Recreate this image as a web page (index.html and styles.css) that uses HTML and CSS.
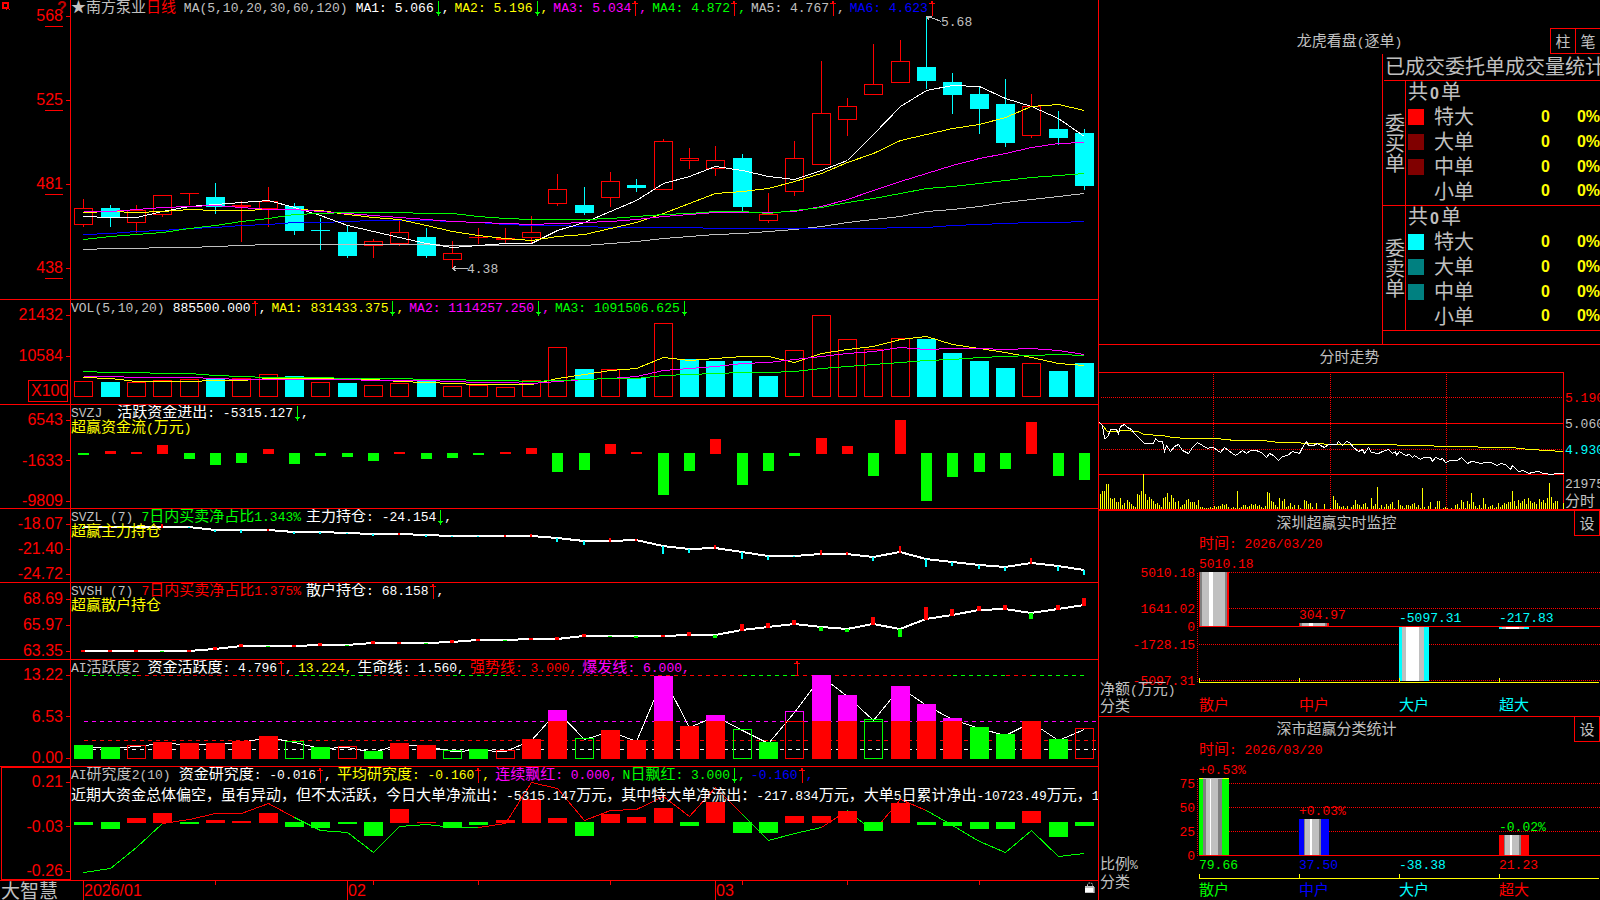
FILE: index.html
```html
<!DOCTYPE html>
<html lang="zh-CN">
<head>
<meta charset="utf-8">
<title>南方泵业 日线 - 大智慧</title>
<link rel="stylesheet" href="styles.css">
</head>
<body>
<svg class="defs" aria-hidden="true">
  <symbol id="up" viewBox="0 0 8 15"><path d="M3 0h2v2h2v1H5v12H4V3H1V2h2z" fill="#f00"/></symbol>
  <symbol id="dn" viewBox="0 0 8 15"><path d="M4 0h1v11h2v1H6v1H5v2H4v-2H3v-1H2v-1h2z" fill="#0f0"/></symbol>
</svg>
<main class="desk">
  <div class="left">
    <section class="panel">
      <div class="axis a1">
        <svg class="pin" viewBox="0 0 9 9"><path d="M0 0h7v7h1v1H7V7H5v1H4V7H0z M2 2v3h3V2z" fill="#f00" fill-rule="evenodd"/></svg>
        <span class="help">?</span>
        <span class="lab">5<u>68</u></span><span class="lab">5<u>25</u></span><span class="lab">4<u>81</u></span><span class="lab">4<u>38</u></span>
      </div>
      <div class="plot">
        <svg id="kline" class="chart"></svg>
        <div class="head"><div class="row">
          <span class="ttl g"><span class="z">★南方泵业<span class="r">日线</span></span> MA(5,10,20,30,60,120)</span>
          <span class="w">MA1: 5.066<svg class="ar"><use href="#dn"/></svg>,</span>
          <span class="y">MA2: 5.196<svg class="ar"><use href="#dn"/></svg>,</span>
          <span class="m">MA3: 5.034<svg class="ar"><use href="#up"/></svg>,</span>
          <span class="n">MA4: 4.872<svg class="ar"><use href="#up"/></svg>,</span>
          <span class="g">MA5: 4.767<svg class="ar"><use href="#up"/></svg>,</span>
          <span class="b">MA6: 4.623<svg class="ar"><use href="#up"/></svg></span>
        </div></div>
      </div>
    </section>
    <section class="panel">
      <div class="axis a2"><span class="lab">21432</span><span class="lab">10584</span><span class="unit">X100</span></div>
      <div class="plot">
        <svg id="vol" class="chart"></svg>
        <div class="head"><div class="row">
          <span class="ttl g">VOL(5,10,20)</span>
          <span class="w">885500.000<svg class="ar"><use href="#up"/></svg>,</span>
          <span class="y">MA1: 831433.375<svg class="ar"><use href="#dn"/></svg>,</span>
          <span class="m">MA2: 1114257.250<svg class="ar"><use href="#dn"/></svg>,</span>
          <span class="n">MA3: 1091506.625<svg class="ar"><use href="#dn"/></svg></span>
        </div></div>
      </div>
    </section>
    <section class="panel">
      <div class="axis a3"><span class="lab">6543</span><span class="lab">-1633</span><span class="lab">-9809</span></div>
      <div class="plot">
        <svg id="flow" class="chart"></svg>
        <div class="head"><div class="row">
          <span class="ttl wide g">SVZJ</span>
          <span class="w"><span class="z">活跃资金进出</span>: -5315.127<svg class="ar"><use href="#dn"/></svg>,</span>
        </div><div class="y"><span class="z">超赢资金流</span>(<span class="z">万元</span>)</div></div>
      </div>
    </section>
    <section class="panel">
      <div class="axis a4"><span class="lab">-18.07</span><span class="lab">-21.40</span><span class="lab">-24.72</span></div>
      <div class="plot">
        <svg id="main" class="chart"></svg>
        <div class="head"><div class="row">
          <span class="ttl g">SVZL (7)</span>
          <span class="n">7<span class="z">日内买卖净占比</span>1.343%</span>
          <span class="w"><span class="z">主力持仓</span>: -24.154<svg class="ar"><use href="#dn"/></svg>,</span>
        </div><div class="y z">超赢主力持仓</div></div>
      </div>
    </section>
    <section class="panel">
      <div class="axis a5"><span class="lab">68.69</span><span class="lab">65.97</span><span class="lab">63.35</span></div>
      <div class="plot">
        <svg id="retail" class="chart"></svg>
        <div class="head"><div class="row">
          <span class="ttl g">SVSH (7)</span>
          <span class="r">7<span class="z">日内买卖净占比</span>1.375%</span>
          <span class="w"><span class="z">散户持仓</span>: 68.158<svg class="ar"><use href="#up"/></svg>,</span>
        </div><div class="y z">超赢散户持仓</div></div>
      </div>
    </section>
    <section class="panel">
      <div class="axis a4"><span class="lab">13.22</span><span class="lab">6.53</span><span class="lab">0.00</span></div>
      <div class="plot">
        <svg id="active" class="chart"></svg>
        <div class="head"><div class="row">
          <span class="ttl g">AI<span class="z">活跃度</span>2</span>
          <span class="w"><span class="z">资金活跃度</span>: 4.796<svg class="ar"><use href="#up"/></svg>,</span>
          <span class="y">13.224,</span>
          <span class="w"><span class="z">生命线</span>: 1.560,</span>
          <span class="r"><span class="z">强势线</span>: 3.000,</span>
          <span class="m"><span class="z">爆发线</span>: 6.000,</span>
          <svg class="ar far"><use href="#up"/></svg>
        </div></div>
      </div>
    </section>
    <section class="panel">
      <div class="axis a4 picked"><span class="lab">0.21</span><span class="lab">-0.03</span><span class="lab">-0.26</span></div>
      <div class="plot">
        <svg id="study" class="chart"></svg>
        <div class="head"><div class="row">
          <span class="ttl g">AI<span class="z">研究度</span>2(10)</span>
          <span class="w"><span class="z">资金研究度</span>: -0.016<svg class="ar"><use href="#up"/></svg>,</span>
          <span class="y"><span class="z">平均研究度</span>: -0.160<svg class="ar"><use href="#up"/></svg>,</span>
          <span class="m"><span class="z">连续飘红</span>: 0.000,</span>
          <span class="n">N<span class="z">日飘红</span>: 3.000<svg class="ar"><use href="#dn"/></svg>,</span>
          <span class="b">-0.160<svg class="ar"><use href="#up"/></svg>,</span>
        </div>
        <p class="note"><span class="z">近期大资金总体偏空，虽有异动，但不太活跃，今日大单净流出：</span>-5315.147<span class="z">万元，其中特大单净流出：</span>-217.834<span class="z">万元，大单</span>5<span class="z">日累计净出</span>-10723.49<span class="z">万元，</span>1</p></div>
      </div>
    </section>
    <footer class="foot">
      <span class="brand">大智慧</span>
      <svg id="dates" class="chart"></svg>
      <svg class="lock" viewBox="0 0 11 12"><path d="M3.5 4V2.500L4.500 1h3l1 1.500V4" fill="none" stroke="#c0c0c0" stroke-dasharray="2 1"/><path d="M2 11h9V5h-1z" fill="#808080"/><rect x="1" y="4" width="9" height="7" fill="#c0c0c0"/><rect x="1" y="6" width="8" height="4" fill="#fff"/></svg>
    </footer>
  </div>
  <div class="right">
    <section class="orders">
      <header class="ohead">
        <h2>龙虎看盘<span class="s">(</span>逐单<span class="s">)</span></h2>
        <div class="btns"><button type="button">柱</button><button type="button">笔</button></div>
      </header>
      <div class="stats">
        <h3>已成交委托单成交量统计</h3>
        <table>
          <colgroup><col class="c1"><col class="c2"><col class="c3"><col class="c4"><col class="c5"></colgroup>
          <tbody>
            <tr class="sum"><th rowspan="5" class="side">委买单</th><td colspan="4">共<b>0</b>单</td></tr>
            <tr><td><i class="sw s1"></i></td><th>特大</th><td>0</td><td>0%</td></tr>
            <tr><td><i class="sw s2"></i></td><th>大单</th><td>0</td><td>0%</td></tr>
            <tr><td><i class="sw s2"></i></td><th>中单</th><td>0</td><td>0%</td></tr>
            <tr class="end"><td></td><th>小单</th><td>0</td><td>0%</td></tr>
          </tbody>
          <tbody>
            <tr class="sum"><th rowspan="5" class="side">委卖单</th><td colspan="4">共<b>0</b>单</td></tr>
            <tr><td><i class="sw s3"></i></td><th>特大</th><td>0</td><td>0%</td></tr>
            <tr><td><i class="sw s4"></i></td><th>大单</th><td>0</td><td>0%</td></tr>
            <tr><td><i class="sw s4"></i></td><th>中单</th><td>0</td><td>0%</td></tr>
            <tr class="end"><td></td><th>小单</th><td>0</td><td>0%</td></tr>
          </tbody>
        </table>
      </div>
    </section>
    <section class="card tick">
      <header class="chead tall"><h2>分时走势</h2></header>
      <div class="plot"><svg id="intraday" class="chart"></svg></div>
    </section>
    <section class="card">
      <header class="chead"><h2>深圳超赢实时监控</h2><button type="button">设</button></header>
      <div class="plot"><svg id="monitor" class="chart"></svg></div>
    </section>
    <section class="card last">
      <header class="chead"><h2>深市超赢分类统计</h2><button type="button">设</button></header>
      <div class="plot"><svg id="share" class="chart"></svg></div>
    </section>
  </div>
</main>
<script src="charts.js"></script>
</body>
</html>
```
FILE: styles.css
```css
* { box-sizing: border-box; }
body {
  margin: 0;
  background: #000;
  color: #c0c0c0;
  font: 13px/15px "Liberation Mono", "Noto Sans CJK SC", monospace;
  overflow: hidden;
}
h2, h3, p { margin: 0; font-weight: normal; }
.defs { position: absolute; width: 0; height: 0; }

.desk {
  display: grid;
  grid-template-columns: minmax(0, 1099fr) minmax(0, 501fr);
  grid-template-rows: minmax(0, 1fr);
  height: 100vh;
}
.left {
  display: grid;
  grid-template-columns: minmax(0, 1fr);
  grid-template-rows: minmax(0, 300fr) minmax(0, 105fr) minmax(0, 104fr) minmax(0, 74fr) minmax(0, 77fr) minmax(0, 107fr) minmax(0, 114fr) minmax(0, 19fr);
  border-right: 1px solid #f00;
  min-width: 0;
}
.right {
  display: grid;
  grid-template-columns: minmax(0, 1fr);
  grid-template-rows: minmax(0, 345fr) minmax(0, 166fr) minmax(0, 206fr) minmax(0, 183fr);
  min-width: 0;
  overflow: hidden;
}

/* indicator panels */
.panel {
  display: grid;
  grid-template-columns: 71px minmax(0, 1fr);
  grid-template-rows: minmax(0, 1fr);
  border-bottom: 1px solid #f00;
}
.axis {
  position: relative;
  display: flex;
  flex-direction: column;
  justify-content: space-between;
  border-right: 1px solid #f00;
  color: #f00;
  font: 16px/14px "Liberation Sans", sans-serif;
}
.lab {
  display: flex;
  justify-content: flex-end;
  align-items: center;
}
.lab::after {
  content: "";
  width: 4px;
  height: 1px;
  margin-left: 3px;
  background: #f00;
}
.lab u { text-decoration: none; border-bottom: 1px solid #f00; margin-bottom: -4px; padding-bottom: 3px; }
.a1 { padding: 9px 0 24px; }
.a2 { padding: 8px 0 0; justify-content: flex-start; gap: 27px; }
.a3 { padding: 8px 0 0; }
.a4 { padding: 8px 0 1px; }
.a5 { padding: 9px 0 1px; }
.a2 .unit {
  align-self: flex-end;
  width: 40px;
  margin: -10px 2px 0 0;
  padding-left: 2px;
  border: 1px solid #f00;
  line-height: 20px;
}
.picked { border: 1px solid #f00; margin-left: 1px; padding-top: 7px; }
.pin { position: absolute; left: 2px; top: 2px; width: 9px; height: 9px; }
.help {
  position: absolute;
  left: 57px;
  top: 1px;
  color: #c00000;
  font: bold 16px/14px "Liberation Sans", sans-serif;
}

.plot {
  display: grid;
  grid-template: minmax(0, 1fr) / minmax(0, 1fr);
  min-width: 0;
  min-height: 0;
  overflow: hidden;
}
.plot > * { grid-area: 1 / 1; }
.chart { display: block; width: 100%; height: 100%; min-width: 0; min-height: 0; shape-rendering: crispEdges; }
.chart text { white-space: pre; }
.chart .zt { font-size: 15px; }
.chart .dt { font: 16px "Liberation Sans", sans-serif; }
.head { white-space: nowrap; min-width: 0; overflow: hidden; z-index: 1; }
.row { display: flex; gap: 5px; height: 16px; padding-top: 1px; }
.ttl { margin-right: 3px; }
.ttl.wide { margin-right: 10px; }
.z { font-size: 15px; }
.ar { width: 8px; height: 15px; vertical-align: top; shape-rendering: crispEdges; }
.far { margin-left: 98px; }
.note { margin-top: 6px; color: #fff; }

.w { color: #fff; }
.y { color: #ff0; }
.m { color: #f0f; }
.n { color: #0f0; }
.r { color: #f00; }
.b { color: #00f; }
.g { color: #c0c0c0; }

.foot {
  display: grid;
  grid-template-columns: 71px minmax(0, 1fr) 14px;
  grid-template-rows: minmax(0, 1fr);
  overflow: hidden;
}
.brand { padding-left: 1px; font-size: 19px; line-height: 18px; font-family: "Noto Sans CJK SC", sans-serif; }
.foot .chart { overflow: visible; }
.lock { width: 11px; height: 12px; margin-top: 1px; }

/* order statistics */
button {
  margin: 0;
  padding: 0;
  border: 1px solid #f00;
  border-radius: 0;
  background: #000;
  color: #c0c0c0;
  font: 15px/20px "Noto Sans CJK SC", sans-serif;
}
h2 { padding-top: 3px; font-size: 15px; line-height: 22px; text-align: center; }
h2 .s { font-size: 13px; }
.orders {
  display: flex;
  flex-direction: column;
  padding-top: 28px;
  border-bottom: 1px solid #f00;
  overflow: hidden;
}
.ohead { display: grid; flex: none; height: 26px; align-items: end; }
.ohead > * { grid-area: 1 / 1; }
.btns { display: flex; justify-self: end; }
.btns button { width: 25px; height: 26px; border-right: 0; }
.stats {
  flex: 1;
  width: 218px;
  margin-left: auto;
  border-left: 1px solid #f00;
  font-family: "Noto Sans CJK SC", sans-serif;
  overflow: hidden;
}
h3 {
  height: 27px;
  margin-left: 1px;
  padding-left: 1px;
  border-bottom: 1px solid #f00;
  font-size: 20px;
  line-height: 23px;
  white-space: nowrap;
}
table {
  width: 217px;
  table-layout: fixed;
  border-spacing: 0;
  font-size: 20px;
  line-height: 20px;
}
.c1 { width: 23px; }
.c2 { width: 28px; }
.c3 { width: 60px; }
.c4 { width: 56px; }
.c5 { width: 50px; }
th, td { padding: 0; font-weight: normal; text-align: left; height: 25px; }
th:not(.side) { padding-bottom: 2px; }
td:nth-child(n+3) {
  color: #ff0;
  font: bold 16px/20px "Liberation Sans", sans-serif;
  text-align: right;
}
.side { width: 23px; padding-left: 2px; border-right: 1px solid #f00; border-bottom: 1px solid #f00; }
.sum td { height: 23px; padding-left: 2px; }
.sum b { padding: 0 2px; font: bold 16px/20px "Liberation Sans", sans-serif; }
.end td, .end th { height: 27px; padding-bottom: 3px; border-bottom: 1px solid #f00; }
.sw { display: block; width: 16px; height: 16px; margin-left: 2px; }
.s1 { background: #f00; }
.s2 { background: #800000; }
.s3 { background: #0ff; }
.s4 { background: #008080; }

/* small chart cards */
.card { display: flex; flex-direction: column; border-bottom: 1px solid #f00; min-height: 0; }
.card .plot { flex: 1; }
.tick { border-bottom-width: 2px; }
.last { border-bottom: 0; }
.chead { display: flex; height: 25px; flex: none; }
.chead h2 { flex: 1; }
.tall { height: 27px; }
.chead button { width: 26px; border-top: 0; }
```
FILE: charts.js
```javascript
const NS = 'http://www.w3.org/2000/svg';
const RED = '#f00', CYAN = '#0ff', GREEN = '#0f0', WHITE = '#fff', YELLOW = '#ff0',
      PINK = '#f0f', BLUE = '#00f', GRAY = '#c0c0c0';

/* A drawing surface whose coordinates scale to the size of its element. */
function surface(id, x0, y0, w, h) {
  const svg = document.getElementById(id);
  svg.textContent = '';
  const box = svg.getBoundingClientRect();
  const kx = box.width / w, ky = box.height / h;
  const X = x => Math.round((x - x0) * kx);
  const Y = y => Math.round((y - y0) * ky);
  const add = (name, attrs) => {
    const el = document.createElementNS(NS, name);
    for (const k in attrs) el.setAttribute(k, attrs[k]);
    svg.appendChild(el);
    return el;
  };
  return {
    rect(x, y, x2, y2, fill) {
      add('rect', { x: X(x), y: Y(y), width: Math.max(1, X(x2) - X(x)), height: Math.max(1, Y(y2) - Y(y)), fill });
    },
    hollow(x, y, x2, y2, stroke) {
      add('rect', { x: X(x) + .5, y: Y(y) + .5, width: X(x2) - X(x) - 1, height: Math.max(1, Y(y2) - Y(y) - 1), fill: 'none', stroke });
    },
    line(pts, stroke, width = 1, dash) {
      const o = width % 2 ? .5 : 0;
      const a = { points: pts.map(p => (X(p[0]) + o) + ',' + (Y(p[1]) + o)).join(' '), fill: 'none', stroke, 'stroke-width': width };
      if (dash) a['stroke-dasharray'] = dash;
      add('polyline', a);
    },
    text(x, yc, str, fill, anchor = 'start') {
      const cjk = /[\u2e80-\uffff]/;
      const t = add('text', { x: X(x), y: Y(yc) + (cjk.test(str) ? 5 : 4), fill, 'text-anchor': anchor });
      for (const part of str.match(/[\u2e80-\uffff]+|[^\u2e80-\uffff]+/g)) {
        const s = document.createElementNS(NS, 'tspan');
        if (cjk.test(part)) s.setAttribute('class', 'zt');
        s.textContent = part;
        t.appendChild(s);
      }
      return t;
    }
  };
}

const cx = i => Math.round(83.2 + 26.34 * i);
const series = a => a.map((y, i) => [cx(i), y]);

/* kind, high, body top, body bottom, low */
const candles = [
  ['r',199,208,225,227],['c',205,208,217,227],['r',205,210,223,233],['r',195,195,215,217],['r',193,193,194,205],
  ['c',183,197,207,214],['r',201,205,207,242],['r',187,201,209,227],['c',203,206,231,235],['c',218,230,231,250],
  ['c',225,232,256,258],['r',239,241,246,258],['r',221,232,244,246],['c',228,237,256,258],['r',241,253,260,268],
  ['r',228,237,238,244],['r',228,238,240,243],['r',216,232,238,243],['r',174,189,204,206],['c',187,205,213,215],
  ['r',172,181,198,207],['c',179,185,188,192],['r',139,141,190,190],['r',148,158,161,169],['r',146,160,169,176],
  ['c',154,158,207,212],['r',193,214,221,223],['r',141,158,192,196],['r',61,113,165,165],['r',98,106,120,136],
  ['r',44,84,95,95],['r',40,61,83,83],['c',16,67,81,89],['c',73,82,95,114],['c',86,94,109,134],
  ['c',79,104,143,147],['r',94,106,136,138],['c',111,129,138,145],['c',129,133,186,190]
];
const averages = [
  [GRAY, [249,248,248,247,247,246,245,244,244,244,244,244,244,244,245,245,245,245,245,245,243,241,238,236,234,233,231,229,226,222,219,216,211,209,206,202,199,196,193]],
  [BLUE, [234,233,231,230,228,227,225,224,222,222,221,220,220,220,221,222,224,225,225,226,227,227,227,227,228,228,228,228,228,228,228,227,227,225,224,223,222,222,221]],
  [WHITE, [216,217,217,211,206,204,202,200,207,215,225,231,237,243,247,245,243,243,230,222,211,200,183,176,166,170,176,179,170,160,134,106,90,85,86,98,106,118,136]],
  [YELLOW, [212,211,212,211,209,210,210,209,209,210,214,217,219,225,231,235,238,240,236,234,228,222,213,203,193,191,188,181,173,162,153,140,134,128,124,117,106,104,110]],
  [PINK, [211,211,209,207,206,205,207,209,209,211,213,215,217,219,221,222,223,224,223,222,221,219,216,214,212,212,212,211,206,199,190,181,173,165,158,153,147,143,142]],
  [GREEN, [239,236,234,232,228,225,221,218,214,213,212,212,212,213,213,216,218,219,219,219,218,216,214,213,211,211,213,210,207,202,198,193,188,186,183,180,177,175,173]]
];

function drawKline() {
  const s = surface('kline', 71, 0, 1027, 299);
  candles.forEach(([k, hi, top, bot, lo], i) => {
    const x = cx(i);
    if (k === 'c') {
      s.rect(x, hi, x + 1, lo, CYAN);
      s.rect(x - 9, top, x + 10, bot, CYAN);
    } else {
      if (hi < top) s.rect(x, hi, x + 1, top, RED);
      if (lo > bot) s.rect(x, bot, x + 1, lo, RED);
      if (bot - top < 3) s.rect(x - 9, top, x + 10, bot, RED);
      else s.hollow(x - 9, top, x + 10, bot, RED);
    }
  });
  averages.forEach(([c, a]) => s.line(series(a), c));
  s.line([[926, 16], [933, 18], [941, 21]], GRAY);
  s.line([[931, 16], [926, 16], [929, 20]], GRAY);
  s.text(941, 22, '5.68', GRAY);
  s.line([[452, 268], [467, 268]], GRAY);
  s.line([[456, 265], [452, 268], [456, 271]], GRAY);
  s.text(467, 269, '4.38', GRAY);
}

function drawVolume() {
  const s = surface('vol', 71, 300, 1027, 104);
  const kinds = 'rcrrrcrrcrcrrcrrrrrcrcrccccrrrrrccccrcc';
  const tops = [381,382,382,380,379,379,378,374,376,382,383,385,383,381,386,385,387,380,347,369,369,378,323,359,361,361,376,350,315,339,349,338,339,353,361,368,363,371,363];
  tops.forEach((y, i) => s[kinds[i] === 'c' ? 'rect' : 'hollow'](cx(i) - 9, y, cx(i) + 10, 397, kinds[i] === 'c' ? CYAN : RED));
  s.line(series([377,378,381,381,381,380,380,378,378,378,379,379,381,382,383,384,384,384,378,374,370,368,357,360,358,356,356,362,353,349,346,339,336,344,348,352,357,363,365]), YELLOW);
  s.line(series([376,376,377,377,377,378,379,379,379,379,379,380,380,380,381,382,382,383,381,379,378,376,370,368,366,363,362,359,356,353,351,347,349,348,348,349,348,350,354]), PINK);
  s.line(series([371,372,372,373,373,375,376,377,377,377,378,378,378,379,379,380,380,381,380,379,378,378,375,374,373,372,372,371,368,366,364,362,360,359,357,356,355,354,355]), GREEN);
}

function drawFlow() {
  const s = surface('flow', 71, 405, 1027, 103);
  [455,451,452,445,459,465,463,449,464,456,457,461,452,459,458,455,452,448,472,470,444,452,495,471,439,485,471,456,438,446,476,420,501,477,472,469,422,476,480]
    .forEach((y, i) => y < 454 ? s.rect(cx(i) - 5, y, cx(i) + 6, 454, RED) : s.rect(cx(i) - 5, 453, cx(i) + 6, y, GREEN));
}

function drawHolding(id, y0, h, line, marks, half, down) {
  const s = surface(id, 71, y0, 1027, h);
  s.line(series(line), WHITE, 2);
  marks.forEach((m, i) => {
    const x = cx(i), y = line[i];
    if (m > 0) s.rect(x - half, y, x + half, y + m, down);
    else if (m < 0) s.rect(x - half, y + m, x + half, y + 1, RED);
  });
}

function drawActive() {
  const s = surface('active', 71, 660, 1027, 106);
  const kinds = 'GGrRRRRRgGrGRRgGrRRgRRRRRgGrRRgRRRGGRGr';
  const tops = [745,747,745,742,743,743,741,736,741,747,746,751,743,745,750,749,750,739,710,738,730,740,676,726,715,729,742,711,675,695,719,686,704,718,727,734,721,739,728];
  [[0,2],[2,8],[8,11],[11,14],[14,16],[16,25],[25,27],[27,33],[33,35],[35,36],[36,38]]
    .forEach(([a, b], i) => s.line([[cx(a), 675], [cx(b), 675]], i % 2 ? RED : GREEN, 1, '4 4'));
  s.line([[83, 721], [1097, 721]], PINK, 1, '4 4');
  s.line([[83, 740], [1097, 740]], RED, 1, '4 4');
  s.line([[83, 749], [1097, 749]], WHITE, 1, '4 4');
  s.line(series(tops.map(y => y + 1)), WHITE);
  tops.forEach((y, i) => {
    const a = cx(i) - 9, b = cx(i) + 10, k = kinds[i];
    const burst = k.toUpperCase() === 'R' && y < 721;
    const c = k.toUpperCase() === 'R' ? RED : GREEN;
    if (k === 'R' || k === 'G') {
      s.rect(a, burst ? 721 : y, b, 759, c);
      if (burst) s.rect(a, y, b, 721, PINK);
    } else {
      if (burst) s.hollow(a, y, b, 722, PINK);
      s.hollow(a, burst ? 721 : y, b, 759, c);
      if (k === 'g' && y < 721) s.rect(a, 721, b, 722, c);
    }
  });
}

function drawStudy() {
  const s = surface('study', 71, 767, 1027, 113);
  const pts = series([872,868,847,823,819,813,813,803,817,830,832,852,826,824,827,827,823,782,788,820,810,809,796,816,787,814,840,833,827,810,831,799,810,825,841,852,830,856,853]);
  [[0,3],[3,8],[8,15],[15,25],[25,28],[28,29],[29,30],[30,32],[32,38]]
    .forEach(([a, b], i) => s.line(pts.slice(a, b + 1), i % 2 ? RED : GREEN));
  [825,829,818,813,824,820,821,813,827,828,824,836,809,822,828,825,820,799,818,836,814,817,808,826,802,833,833,816,816,811,831,803,825,826,829,829,811,837,826]
    .forEach((y, i) => y < 823 ? s.rect(cx(i) - 9, y, cx(i) + 10, 823, RED) : s.rect(cx(i) - 9, 822, cx(i) + 10, y, GREEN));
}

function drawDates() {
  const s = surface('dates', 71, 881, 1013, 19);
  [1, 5, 11, 15, 20, 25, 29, 34].forEach(i => s.rect(cx(i), 881, cx(i) + 1, 885, RED));
  [[0, '2026/01'], [10, '02'], [24, '03']].forEach(([i, label]) => {
    s.rect(cx(i), 881, cx(i) + 1, 900, RED);
    s.text(cx(i) + 1, 892, label, RED).firstChild.setAttribute('class', 'dt');
  });
}

function drawIntraday() {
  const s = surface('intraday', 1099, 372, 501, 137);
  const map = a => a.map(([u, v]) => [1095 + u / 3, 340 + v / 3]);
  [397, 449].forEach(y => s.line([[1100, y], [1563, y]], RED, 1, '1 1'));
  [1213, 1330, 1446].forEach(x => s.line([[x, 373], [x, 509]], RED, 1, '1 1'));
  [372, 423, 474].forEach(y => s.rect(1099, y, 1563, y + 1, RED));
  s.rect(1563, 372, 1564, 509, RED);
  const v = [15,18,18,25,25,11,10,11,7,7,11,4,6,9,7,5,3,2,15,14,18,35,15,9,12,10,8,5,6,4,2,11,12,16,7,14,11,7,8,2,4,5,9,10,7,7,7,4,9,2,2,1,1,1,2,1,3,2,3,3,5,4,5,2,1,2,1,18,1,2,4,4,2,3,5,4,5,3,4,2,1,3,17,16,8,7,4,2,11,8,10,2,3,6,2,4,0,4,1,0,9,8,5,6,2,0,6,0,0,0,5,0,0,1,13,9,6,3,2,3,1,3,0,2,4,9,5,4,2,5,6,2,0,11,3,5,22,1,4,2,5,3,5,7,1,0,9,4,3,1,4,4,3,5,6,2,4,1,21,2,0,3,7,0,2,8,8,0,1,2,1,0,1,0,4,5,1,9,7,1,8,5,16,7,3,1,4,1,11,5,2,3,4,1,2,6,2,4,6,5,7,7,18,8,3,9,6,8,10,5,11,8,6,7,5,10,7,9,6,11,26,12,6,8,8,0,0,6];
  v.forEach((h, k) => { const x = 1100 + Math.round(463 * k / (v.length - 1)); if (h) s.rect(x, 509 - h, x + 1, 509, YELLOW); });
  s.line(map([[12,245],[22,256],[36,272],[66,273],[80,271],[130,272],[145,281],[200,284],[230,292],[275,295],[360,295],[420,301],[505,301],[550,307],[680,308],[690,311],[900,311],[910,314],[1010,314],[1020,317],[1105,318],[1190,321],[1250,322],[1270,325],[1350,329],[1403,334]]), YELLOW);
  s.line(map([[12,245],[20,255],[28,293],[36,290],[46,268],[62,266],[70,280],[76,258],[88,252],[96,262],[108,266],[118,278],[130,292],[146,310],[175,310],[181,293],[188,303],[200,303],[208,333],[214,316],[226,334],[238,318],[250,312],[262,330],[280,340],[292,320],[307,305],[320,315],[335,325],[345,322],[355,320],[365,330],[375,336],[386,322],[400,330],[412,340],[420,346],[430,338],[442,330],[452,338],[465,330],[480,330],[493,332],[502,338],[512,352],[522,340],[535,346],[550,360],[562,348],[575,344],[590,334],[612,340],[620,322],[632,304],[640,316],[655,316],[665,310],[675,316],[688,322],[700,311],[722,311],[730,303],[740,314],[752,303],[762,306],[775,322],[790,332],[800,328],[806,338],[820,322],[828,336],[850,340],[862,334],[878,328],[890,338],[900,334],[904,346],[912,334],[930,346],[942,342],[950,350],[958,346],[975,356],[985,352],[1005,352],[1012,364],[1020,352],[1035,358],[1042,354],[1050,366],[1065,360],[1085,360],[1098,352],[1116,370],[1128,364],[1145,366],[1155,370],[1170,366],[1185,366],[1205,376],[1215,370],[1230,372],[1245,388],[1250,376],[1270,392],[1285,390],[1300,398],[1312,396],[1330,394],[1345,400],[1370,403],[1380,400],[1403,400]]), WHITE);
  [[398, '5.190', RED], [424, '5.060', GRAY], [450, '4.930', CYAN], [484, '21975', GRAY], [501, '分时', GRAY]]
    .forEach(([y, t, c]) => s.text(1565, y, t, c));
}

function column(s, x, y, y2, stops) {
  stops.forEach(([from, to, c]) => s.rect(x + from, y, x + to, y2, c));
}

function drawMonitor() {
  const s = surface('monitor', 1099, 536, 501, 180);
  [572, 608, 644, 680].forEach(y => s.line([[1198, y], [1600, y]], RED, 1, '1 1'));
  s.line([[1197, 572], [1197, 681]], RED, 1, '1 1');
  const up = [[0,1,RED],[1,3,'#808080'],[3,10,GRAY],[10,14,WHITE],[14,26,GRAY],[26,28,'#808080'],[28,30,RED]];
  const down = [[0,3,CYAN],[3,7,GRAY],[7,20,WHITE],[20,25,GRAY],[25,30,CYAN]];
  column(s, 1199, 572, 626, up);
  column(s, 1299, 623, 626, up);
  column(s, 1399, 627, 681, down);
  column(s, 1499, 627, 629, down);
  s.rect(1199, 626, 1600, 627, RED);
  s.rect(1199, 682, 1599, 683, YELLOW);
  [1199, 1299, 1399, 1499].forEach(x => s.rect(x, 678, x + 1, 683, YELLOW));
  s.text(1199, 543, '时间', RED);
  s.text(1229, 544, ': 2026/03/20', RED);
  [[573, '5010.18'], [609, '1641.02'], [627, '0'], [645, '-1728.15'], [681, '-5097.31']].forEach(([y, t]) => s.text(1195, y, t, RED, 'end'));
  s.text(1199, 564, '5010.18', RED);
  s.text(1299, 615, '304.97', RED);
  s.text(1399, 618, '-5097.31', CYAN);
  s.text(1499, 618, '-217.83', CYAN);
  s.text(1100, 689, '净额(万元)', GRAY);
  s.text(1100, 706, '分类', GRAY);
  [[1199, '散户', RED], [1299, '中户', RED], [1399, '大户', CYAN], [1499, '超大', CYAN]].forEach(([x, t, c]) => s.text(x, 705, t, c));
}

function drawShare() {
  const s = surface('share', 1099, 742, 501, 158);
  [783, 807, 831].forEach(y => s.line([[1198, y], [1600, y]], RED, 1, '1 1'));
  s.line([[1197, 778], [1197, 856]], RED, 1, '1 1');
  const thin = c => [[0,5,c],[5,6,'#808080'],[6,11,GRAY],[11,13,WHITE],[13,20,GRAY],[20,22,'#808080'],[22,30,c]];
  column(s, 1199, 778, 855, [[0,4,GREEN],[4,7,'#808080'],[7,11,GRAY],[11,12,WHITE],[12,19,GRAY],[19,23,'#808080'],[23,30,GREEN]]);
  column(s, 1199, 778, 779, [[0,4,YELLOW],[4,24,GRAY],[24,30,YELLOW]]);
  column(s, 1299, 819, 855, thin(BLUE));
  column(s, 1499, 835, 855, thin(RED));
  s.rect(1199, 855, 1600, 856, RED);
  s.rect(1199, 878, 1599, 879, YELLOW);
  [1199, 1299, 1399, 1499].forEach(x => s.rect(x, 874, x + 1, 879, YELLOW));
  s.text(1199, 749, '时间', RED);
  s.text(1229, 750, ': 2026/03/20', RED);
  [[784, '75'], [808, '50'], [832, '25'], [856, '0']].forEach(([y, t]) => s.text(1195, y, t, RED, 'end'));
  s.text(1199, 770, '+0.53%', RED);
  s.text(1299, 811, '+0.03%', RED);
  s.text(1499, 827, '-0.02%', GREEN);
  s.text(1100, 864, '比例%', GRAY);
  s.text(1100, 882, '分类', GRAY);
  [[1199, '79.66', '散户', GREEN], [1299, '37.50', '中户', BLUE], [1399, '-38.38', '大户', CYAN], [1499, '21.23', '超大', RED]]
    .forEach(([x, v, t, c]) => { s.text(x, 865, v, c); s.text(x, 890, t, c); });
}

function drawAll() {
  drawKline();
  drawVolume();
  drawFlow();
  drawHolding('main', 509, 73,
    [527,527,527,527,527,530,530,530,532,532,533,534,534,535,536,536,536,536,538,541,541,540,546,549,548,552,556,556,554,554,557,552,559,562,565,567,563,566,570],
    [1,-1,0,-3,1,2,3,-1,2,2,1,2,-1,2,1,1,-1,-2,4,4,-3,-1,8,4,-3,7,4,1,-4,-2,4,-6,8,4,4,4,-5,5,5], 1, CYAN);
  drawHolding('retail', 583, 76,
    [651,651,651,651,651,649,646,646,646,645,645,643,643,643,642,640,640,639,639,636,636,636,636,635,635,630,627,624,627,629,624,629,619,615,610,609,613,609,605],
    [-1,-1,-1,1,-1,-2,-2,1,-1,-2,1,-2,-1,1,-2,-1,1,-1,-2,-2,1,2,-1,-3,3,-6,-4,-4,4,3,-7,8,-12,-6,-4,-4,6,-4,-7], 2, GREEN);
  drawActive();
  drawStudy();
  drawDates();
  drawIntraday();
  drawMonitor();
  drawShare();
}
drawAll();
window.addEventListener('resize', drawAll);
```
